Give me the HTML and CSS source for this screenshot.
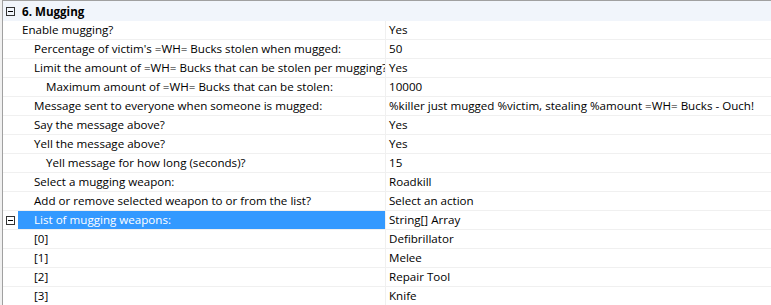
FILE: index.html
```html
<!DOCTYPE html>
<html lang="en">
<head>
  <meta charset="UTF-8">
  <meta name="viewport" content="width=device-width, initial-scale=1.0">
  <title>Settings - Mugging</title>
  <link rel="stylesheet" href="styles.css">
</head>
<body>
  <div class="grid">
    <div class="category">
      <span class="toggle"></span>
      <span class="category-name">6. Mugging</span>
    </div>
    <div id="rows"></div>
  </div>

  <script>
    const settings = [
      { name: "Enable mugging?", value: "Yes", level: 1 },
      { name: "Percentage of victim's =WH= Bucks stolen when mugged:", value: "50", level: 2 },
      { name: "Limit the amount of =WH= Bucks that can be stolen per mugging?", value: "Yes", level: 2 },
      { name: "Maximum amount of =WH= Bucks that can be stolen:", value: "10000", level: 3 },
      { name: "Message sent to everyone when someone is mugged:", value: "%killer just mugged %victim, stealing %amount =WH= Bucks - Ouch!", level: 2 },
      { name: "Say the message above?", value: "Yes", level: 2 },
      { name: "Yell the message above?", value: "Yes", level: 2 },
      { name: "Yell message for how long (seconds)?", value: "15", level: 3 },
      { name: "Select a mugging weapon:", value: "Roadkill", level: 2 },
      { name: "Add or remove selected weapon to or from the list?", value: "Select an action", level: 2 },
      { name: "List of mugging weapons:", value: "String[] Array", level: 2, expanded: true, selected: true },
      { name: "[0]", value: "Defibrillator", level: 2 },
      { name: "[1]", value: "Melee", level: 2 },
      { name: "[2]", value: "Repair Tool", level: 2 },
      { name: "[3]", value: "Knife", level: 2 },
    ];

    const rows = document.getElementById('rows');

    settings.forEach(item => {
      const row = document.createElement('div');
      row.classList.add('row');
      if (item.selected) row.classList.add('selected');

      row.innerHTML = `
        <div class="gutter">${item.expanded ? '<span class="toggle"></span>' : ''}</div>
        <div class="name level-${item.level}">${item.name}</div>
        <div class="value">${item.value}</div>
      `;

      rows.appendChild(row);
    });
  </script>
</body>
</html>
```

FILE: styles.css
```css
body {
  margin: 0;
  padding: 0 0 0 2px;
  background-color: #f0f0f0;
  font-family: "Open Sans", "Noto Sans", sans-serif;
  font-size: 11.6px;
  color: #000;
}

.grid {
  border-top: 1px solid #a0a0a0;
  border-left: 1px solid #a0a0a0;
  background-color: #fff;
  height: 304px;
  overflow: hidden;
}

.category {
  display: flex;
  align-items: center;
  height: 20px;
  background-color: #f1f5fb;
}

.category .toggle {
  margin-left: 3px;
}

.category-name {
  margin-left: 7px;
  font-weight: bold;
}

.toggle {
  position: relative;
  display: block;
  width: 7px;
  height: 7px;
  border: 1px solid #333;
}

.toggle::after {
  content: "";
  position: absolute;
  left: 1px;
  top: 3px;
  width: 5px;
  height: 1px;
  background-color: #000;
}

.row {
  display: flex;
  height: 18px;
  border-bottom: 1px solid #f0f0f0;
  line-height: 18px;
}

.gutter {
  flex: none;
  width: 15px;
  display: flex;
  align-items: center;
}

.gutter .toggle {
  margin-left: 3px;
}

.name {
  flex: none;
  overflow: hidden;
  white-space: nowrap;
}

.level-1 {
  padding-left: 4px;
  width: 363px;
}

.level-2 {
  padding-left: 16px;
  width: 351px;
}

.level-3 {
  padding-left: 28px;
  width: 339px;
}

.value {
  flex: 1;
  border-left: 1px solid #f0f0f0;
  padding-left: 3px;
  white-space: nowrap;
  overflow: hidden;
}

.selected .name {
  background-color: #3399ff;
  color: #fff;
}
```
